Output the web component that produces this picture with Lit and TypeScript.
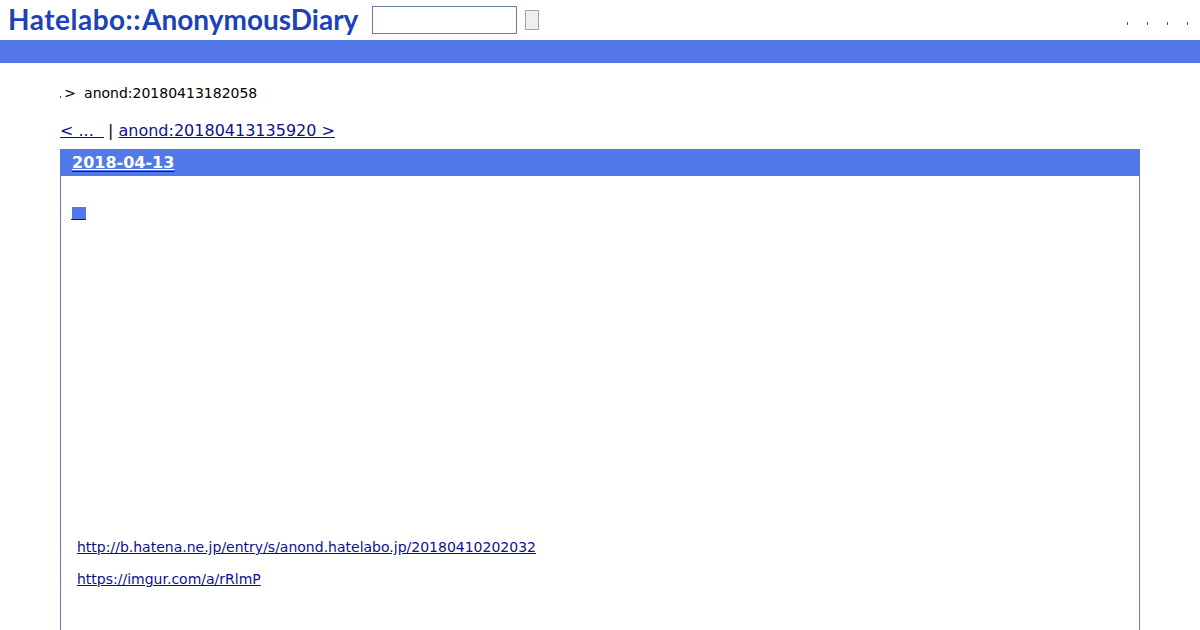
import { LitElement, html, css } from 'lit';
import { customElement } from 'lit/decorators.js';

@customElement('app-root')
export class AppRoot extends LitElement {
  static styles = css`
    :host {
      display: block;
      height: 630px;
      overflow: hidden;
      background: #fff;
      color: #000;
      font-family: "DejaVu Sans", sans-serif;
      font-size: 14px;
    }
    a {
      color: #0f0f8f;
    }
    .header {
      display: flex;
      align-items: center;
      height: 40px;
      padding-left: 8px;
      box-sizing: border-box;
    }
    .logo {
      width: 351px;
      margin-right: 13px;
      margin-top: -2px;
      color: #1c42b8;
      font-family: Lato, sans-serif;
      font-size: 28px;
      font-weight: 700;
      white-space: nowrap;
    }
    .logo .first {
      letter-spacing: 0.5px;
      margin-right: 1px;
    }
    .search {
      width: 145px;
      height: 28px;
      box-sizing: border-box;
      border: 1px solid #6b7c9c;
      background: #fff;
    }
    .go {
      width: 14px;
      height: 20px;
      box-sizing: border-box;
      margin-left: 8px;
      border: 1px solid #a0a0a0;
      background: #efefef;
    }
    .dots {
      display: flex;
      gap: 19px;
      margin-left: auto;
      margin-right: 12px;
      margin-top: 7px;
    }
    .dots span {
      width: 1px;
      height: 3px;
      background: #555;
    }
    .band {
      height: 23px;
      background: #5279e7;
    }
    .main {
      padding: 0 60px;
    }
    .crumb {
      display: flex;
      align-items: center;
      height: 20px;
      margin-top: 20px;
    }
    .crumb .mark {
      width: 1px;
      height: 2px;
      margin-top: 7px;
      margin-right: 3px;
      background: #444;
    }
    .crumb .sep {
      margin-right: 8px;
      font-size: 14.4px;
    }
    .pager {
      margin-top: 18px;
      margin-bottom: 9px;
      height: 19px;
      line-height: 19px;
      font-size: 16px;
      white-space: pre;
    }
    .pager .prev {
      margin-right: -1px;
    }
    .section {
      height: 520px;
      border: 1px solid #6b7c9c;
      border-top: none;
      box-sizing: border-box;
    }
    .title {
      height: 27px;
      margin: 0 -1px;
      padding-left: 12px;
      background: #5279e7;
      font-size: 16px;
      font-weight: 700;
      line-height: 27px;
    }
    .title a {
      text-underline-offset: 3px;
      text-decoration-thickness: 1px;
    }
    .title span {
      color: #fff;
      text-decoration: underline #fff;
      text-underline-offset: 1px;
      text-decoration-thickness: 1px;
    }
    .entry {
      padding: 26px 0 0 10px;
    }
    .square {
      display: block;
      width: 15px;
      height: 18px;
      box-sizing: border-box;
      padding: 5px 0 0 1px;
      border-bottom: 1px solid #0f0f8f;
    }
    .square span {
      display: block;
      width: 14px;
      height: 12px;
      background: #5279e7;
    }
    .links {
      margin: 319px 0 0 6px;
    }
    .links p {
      margin: 0 0 15px;
      line-height: 17px;
    }
  `;

  render() {
    return html`
      <div class="header">
        <div class="logo"><span class="first">Hatelabo::</span><span>AnonymousDiary</span></div>
        <div class="search"></div>
        <div class="go"></div>
        <div class="dots"><span></span><span></span><span></span><span></span></div>
      </div>
      <div class="band"></div>
      <div class="main">
        <div class="crumb">
          <span class="mark"></span><span class="sep">&gt;</span><span>anond:20180413182058</span>
        </div>
        <div class="pager"><a class="prev" href="#">&lt; ...  </a> | <a href="#">anond:20180413135920 &gt;</a></div>
        <div class="section">
          <div class="title"><a href="#"><span>2018-04-13</span></a></div>
          <div class="entry">
            <a class="square" href="#"><span></span></a>
            <div class="links">
              <p><a href="#">http://b.hatena.ne.jp/entry/s/anond.hatelabo.jp/20180410202032</a></p>
              <p><a href="#">https://imgur.com/a/rRlmP</a></p>
            </div>
          </div>
        </div>
      </div>
    `;
  }
}
